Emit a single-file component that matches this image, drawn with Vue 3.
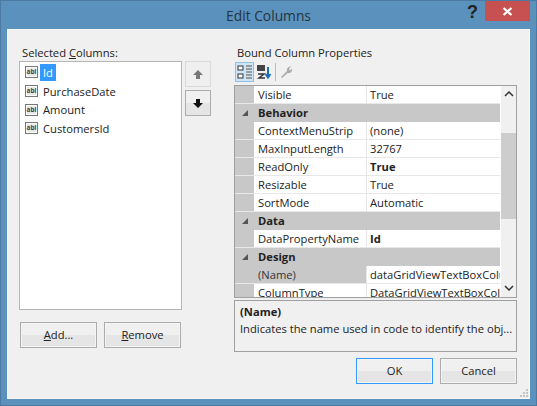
<script setup>
const columns = ['Id', 'PurchaseDate', 'Amount', 'CustomersId']

const rows = [
  { name: 'Visible', value: 'True' },
  { cat: 'Behavior' },
  { name: 'ContextMenuStrip', value: '(none)' },
  { name: 'MaxInputLength', value: '32767' },
  { name: 'ReadOnly', value: 'True', bold: true },
  { name: 'Resizable', value: 'True' },
  { name: 'SortMode', value: 'Automatic' },
  { cat: 'Data' },
  { name: 'DataPropertyName', value: 'Id', bold: true },
  { cat: 'Design' },
  { name: '(Name)', value: 'dataGridViewTextBoxColumn1', grey: true },
  { name: 'ColumnType', value: 'DataGridViewTextBoxColumn' },
]
</script>

<template>
  <div class="window">
    <div class="titlebar">
      <span class="title">Edit Columns</span>
      <span class="help">?</span>
      <span class="close">
        <svg width="11" height="9" viewBox="0 0 11 9"><path d="M1.500 1l8 7M9.500 1l-8 7" stroke="#fff" stroke-width="2.200" fill="none" /></svg>
      </span>
    </div>
    <div class="body">
      <div class="left">
        <div class="label">Selected <u>C</u>olumns:</div>
        <ul class="list">
          <li v-for="(c, i) in columns" :key="c" class="item">
            <span class="abl">abl</span>
            <span class="item-text" :class="{ selected: i === 0 }">{{ c }}</span>
          </li>
        </ul>
        <div class="left-buttons">
          <button class="btn"><u>A</u>dd...</button>
          <button class="btn"><u>R</u>emove</button>
        </div>
      </div>
      <div class="arrows">
        <button class="arrow disabled">
          <svg width="12" height="11" viewBox="0 0 12 11"><path d="M6 1l5 5H8v4H4V6H1z" fill="#777" /></svg>
        </button>
        <button class="arrow">
          <svg width="12" height="11" viewBox="0 0 12 11"><path d="M6 10L1 5h3V1h4v4h3z" fill="#111" /></svg>
        </button>
      </div>
      <div class="right">
        <div class="label">Bound Column Properties</div>
        <div class="toolbar">
          <span class="tool active">
            <svg width="16" height="16" viewBox="0 0 16 16">
              <rect x="1" y="2" width="5" height="4" fill="#fff" stroke="#333" />
              <rect x="1" y="10" width="5" height="4" fill="#fff" stroke="#333" />
              <path d="M9 2h6M9 5h6M9 8h6M9 11h6M9 14h6" stroke="#999" stroke-width="2" />
            </svg>
          </span>
          <span class="tool">
            <svg width="16" height="16" viewBox="0 0 16 16">
              <rect x="1" y="1" width="8" height="6" fill="#444" />
              <path d="M2 10h6L3 14h6" stroke="#333" stroke-width="1.500" fill="none" />
              <path d="M12 3v10M9.500 10l2.500 3.500 2.500-3.500" stroke="#1c6fb8" stroke-width="2" fill="none" />
            </svg>
          </span>
          <span class="sep"></span>
          <span class="tool">
            <svg width="16" height="16" viewBox="0 0 16 16">
              <path d="M3 14l-1-1 6-6c-.6-2 .8-4.500 4-4.500L10 5l1 1.500 2.200-1.800c.3 3-2 5-4.500 4.300z" fill="#aaa" />
            </svg>
          </span>
        </div>
        <div class="grid">
          <div class="rows">
            <div v-for="r in rows" :key="r.name || r.cat" class="row" :class="{ cat: r.cat }">
              <template v-if="r.cat">
                <span class="gutter"><i class="tri"></i></span>
                <span class="cat-name">{{ r.cat }}</span>
              </template>
              <template v-else>
                <span class="gutter"></span>
                <span class="name" :class="{ named: r.grey }">{{ r.name }}</span>
                <span class="value" :class="{ strong: r.bold }">{{ r.value }}</span>
              </template>
            </div>
          </div>
          <div class="scrollbar">
            <svg class="chev" width="10" height="6" viewBox="0 0 10 6"><path d="M1 5l4-4 4 4" stroke="#333" stroke-width="1.500" fill="none" /></svg>
            <div class="thumb"></div>
            <svg class="chev" width="10" height="6" viewBox="0 0 10 6"><path d="M1 1l4 4 4-4" stroke="#333" stroke-width="1.500" fill="none" /></svg>
          </div>
        </div>
        <div class="desc">
          <div class="desc-title">(Name)</div>
          <div>Indicates the name used in code to identify the obj...</div>
        </div>
        <div class="right-buttons">
          <button class="btn primary">OK</button>
          <button class="btn">Cancel</button>
        </div>
      </div>
      <svg class="grip" width="10" height="10" viewBox="0 0 10 10">
        <path d="M7 1h2v2H7zM4 4h2v2H4zM7 4h2v2H7zM1 7h2v2H1zM4 7h2v2H4zM7 7h2v2H7z" fill="#c4c4c4" />
      </svg>
    </div>
  </div>
</template>

<style>
html, body {
  margin: 0;
  padding: 0;
  overflow: hidden;
}
</style>

<style scoped>
.window {
  width: 537px;
  height: 406px;
  box-sizing: border-box;
  background: #5a92bd;
  border: 1px solid #4b7ba3;
  padding: 0 6px 6px;
  display: flex;
  flex-direction: column;
  font-family: "Open Sans", "Liberation Sans", sans-serif;
  font-size: 11.2px;
  color: #222;
}

.titlebar {
  height: 28px;
  flex: none;
  display: flex;
  align-items: flex-start;
  position: relative;
}

.title {
  position: absolute;
  left: 0;
  right: 0;
  top: 5px;
  text-align: center;
  font-size: 13.8px;
  color: #26343f;
}

.help {
  margin-left: auto;
  margin-right: 7px;
  font-size: 18px;
  font-weight: 700;
  color: #222;
  font-family: "Liberation Sans", sans-serif;
  line-height: 22px;
}

.close {
  width: 45px;
  height: 20px;
  background: #c75050;
  display: flex;
  align-items: center;
  justify-content: center;
}

.body {
  flex: 1;
  display: flex;
  position: relative;
  background: #f0f0f0;
  border: 1px solid #f8f8f8;
  padding: 0 12px 0 11px;
}

.grip {
  position: absolute;
  right: 0;
  bottom: 0;
}

.left {
  width: 163px;
  flex: none;
  display: flex;
  flex-direction: column;
}

.label {
  margin-top: 14px;
  height: 17px;
  line-height: 17px;
  padding-left: 3px;
  white-space: nowrap;
}

.list {
  list-style: none;
  margin: 0;
  padding: 1px 0 0;
  height: 249px;
  box-sizing: border-box;
  background: #fff;
  border: 1px solid #b5b5b5;
}

.item {
  height: 18.7px;
  display: flex;
  align-items: center;
  padding-left: 5px;
}

.abl {
  width: 13px;
  height: 12px;
  box-sizing: border-box;
  border: 1px solid #777;
  background: #e8e8e8;
  font-size: 6.5px;
  font-weight: 700;
  line-height: 9px;
  text-align: center;
  color: #444;
  box-shadow: inset 0 0 0 1px #fff;
  flex: none;
  overflow: hidden;
}

.item-text {
  margin-left: 2px;
  padding: 0 3px;
  line-height: 17px;
}

.selected {
  background: #3399ff;
  color: #fff;
}

.left-buttons {
  display: flex;
  justify-content: space-between;
  padding: 0 1px;
  margin-top: 12px;
}

.btn {
  width: 77px;
  height: 26px;
  padding: 0 0 1px;
  font: inherit;
  color: inherit;
  border: 1px solid #acacac;
  background: linear-gradient(#f0f0f0, #f0f0f0 50%, #e5e5e5 50%, #e5e5e5);
  box-shadow: inset 0 0 0 1px #f4f4f4;
}

.primary {
  border: 1px solid #3399ff;
}

.arrows {
  width: 26px;
  flex: none;
  margin-left: 3px;
  padding-top: 31px;
  display: flex;
  flex-direction: column;
  gap: 3px;
}

.arrow {
  width: 26px;
  height: 26px;
  padding: 0;
  display: flex;
  align-items: center;
  justify-content: center;
  border: 1px solid #acacac;
  background: linear-gradient(#f0f0f0, #f0f0f0 50%, #e5e5e5 50%, #e5e5e5);
}

.arrow.disabled {
  background: #efefef;
  border-color: #d9d9d9;
}

.right {
  width: 283px;
  flex: none;
  margin-left: 23px;
  display: flex;
  flex-direction: column;
}

.toolbar {
  height: 24px;
  display: flex;
  align-items: flex-start;
  padding: 1px 0 0 1px;
  gap: 1px;
  box-sizing: border-box;
}

.tool {
  width: 18px;
  height: 20px;
  display: flex;
  align-items: center;
  justify-content: center;
  box-sizing: border-box;
}

.tool.active {
  width: 19px;
  background: #cde6f7;
  border: 1px solid #92c0e0;
}

.sep {
  width: 1px;
  height: 18px;
  background: #bbb;
  margin: 1px;
}

.grid {
  height: 213px;
  display: flex;
  background: #fff;
  border: 1px solid #a0a0a0;
  box-sizing: border-box;
  overflow: hidden;
}

.rows {
  flex: 1;
  min-width: 0;
  margin-right: 1px;
}

.row {
  height: 18px;
  display: flex;
  line-height: 17px;
  white-space: nowrap;
  overflow: hidden;
  border-bottom: 1px solid #e8e8e8;
  box-sizing: border-box;
}

.row.cat {
  background: #c8c8c8;
  border-bottom-color: #c8c8c8;
}

.gutter {
  width: 19px;
  flex: none;
  background: #c8c8c8;
  display: flex;
  align-items: center;
  justify-content: center;
}

.tri {
  width: 0;
  height: 0;
  border-left: 6px solid transparent;
  border-bottom: 6px solid #555;
}

.cat-name {
  padding-left: 4px;
  font-weight: 700;
}

.name {
  width: 113px;
  flex: none;
  padding-left: 4px;
  box-sizing: border-box;
  border-right: 1px solid #e8e8e8;
}

.name.named {
  background: #c8c8c8;
  color: #333;
}

.value {
  flex: 1;
  min-width: 0;
  overflow: hidden;
  padding-left: 3px;
}

.strong {
  font-weight: 700;
}

.scrollbar {
  width: 15px;
  flex: none;
  background: #f0f0f0;
  display: flex;
  flex-direction: column;
  align-items: center;
  justify-content: space-between;
  padding: 5px 0 6px;
  box-sizing: border-box;
  position: relative;
}

.thumb {
  position: absolute;
  left: 0;
  right: 0;
  top: 47px;
  height: 86px;
  background: #cdcdcd;
}

.desc {
  height: 52px;
  margin-top: 2px;
  box-sizing: border-box;
  border: 1px solid #a0a0a0;
  padding: 2px 5px;
  line-height: 17px;
  white-space: nowrap;
  overflow: hidden;
}

.desc-title {
  font-weight: 700;
}

.right-buttons {
  display: flex;
  justify-content: flex-end;
  gap: 7px;
  margin-top: 6px;
}
</style>
